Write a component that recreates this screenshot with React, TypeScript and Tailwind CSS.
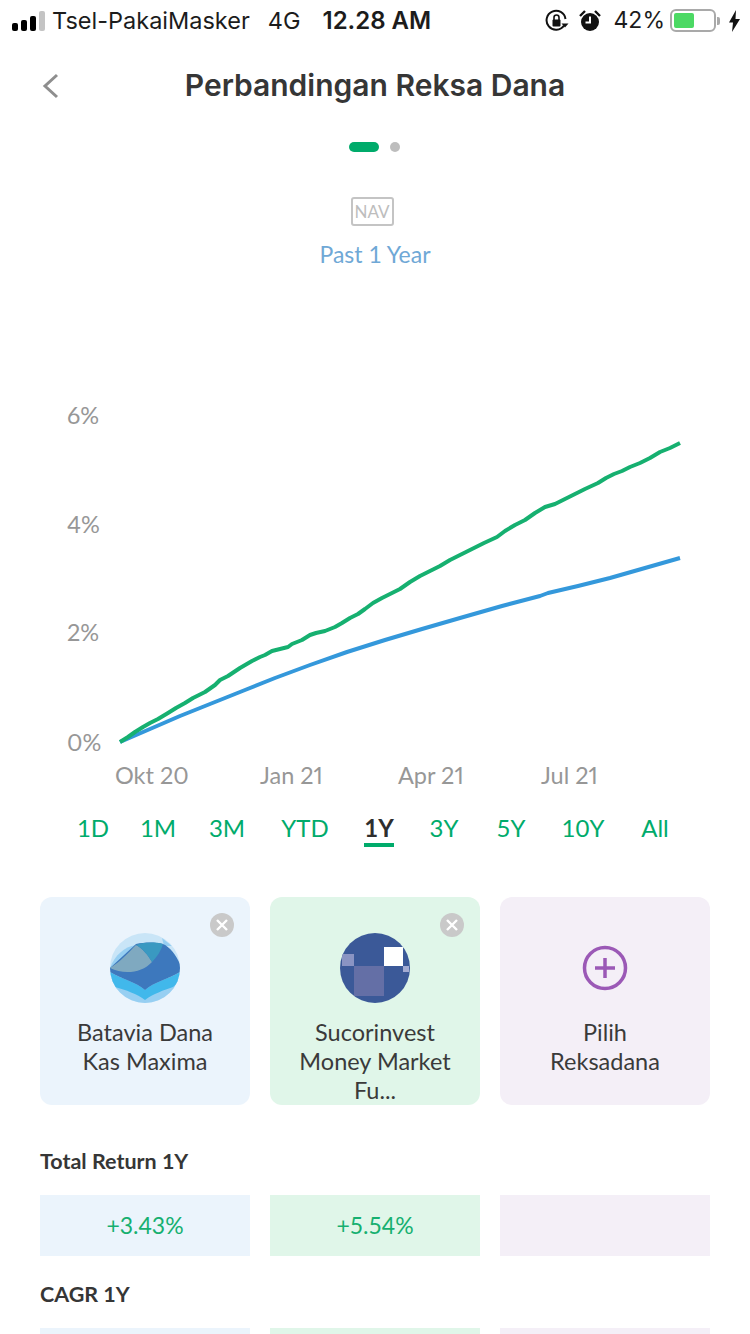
const ranges = [
  { label: "1D", width: "w-[66px]" },
  { label: "1M", width: "w-[64px]" },
  { label: "3M", width: "w-[74px]" },
  { label: "YTD", width: "w-[82px]" },
  { label: "1Y", width: "w-[66px]" },
  { label: "3Y", width: "w-[64px]" },
  { label: "5Y", width: "w-[70px]" },
  { label: "10Y", width: "w-[74px]" },
  { label: "All", width: "w-[70px]" },
];

const greenLine =
  "120,742 128,737 135,732 143,727 150,723 158,719 168,713 176,708 185,703 193,698 205,692 215,685 220,680 228,676 240,668 252,661 260,657 265,655 272,651 280,649 288,647 292,644 302,640 310,635 316,633 325,631 335,627 342,623 350,618 358,614 365,609 373,603 382,598 392,593 400,589 410,582 420,576 430,571 440,566 450,560 460,555 472,549 484,543 497,537 505,531 515,525 525,520 535,513 545,507 555,504 565,499 575,494 585,489 598,483 606,478 614,474 622,471 630,467 640,463 650,458 660,452 670,448 680,443";
const blueLine =
  "120,742 150,729 180,716 210,704 235,694 245,690 275,678 310,665 347,652 385,640 422,629 460,618 502,606 540,596 548,593 578,586 610,578 645,568 680,558";

function StatusBar() {
  return (
    <div className="flex h-[41px] items-center justify-between pl-[12px] pr-[10px] font-['Inter',sans-serif] text-[#1c1c1c]">
      <div className="flex items-center">
        <div className="flex items-end gap-[3px]">
          <div className="h-[8px] w-[6px] rounded-[2px] bg-black" />
          <div className="h-[11px] w-[6px] rounded-[2px] bg-black" />
          <div className="h-[15px] w-[6px] rounded-[2px] bg-black" />
          <div className="h-[20px] w-[6px] rounded-[2px] bg-[#c4c4c4]" />
        </div>
        <span className="ml-[7px] text-[23.5px]">Tsel-PakaiMasker</span>
        <span className="ml-[18px] text-[23.5px]">4G</span>
        <span className="ml-[22px] text-[24px] font-semibold">12.28 AM</span>
      </div>
      <div className="flex items-center">
        <svg width="24" height="24" viewBox="0 0 24 24" fill="none">
          <path d="M19 16.5A9.5 9.5 0 1 1 20.5 10" stroke="#111" strokeWidth="2" />
          <path d="M16.5 14.5h7l-3.5 4z" fill="#111" />
          <rect x="7.5" y="10.5" width="8" height="7" rx="1" fill="#111" />
          <path d="M9 11V8.5a2.5 2.5 0 0 1 5 0V11" stroke="#111" strokeWidth="1.6" />
        </svg>
        <svg className="ml-[9px]" width="24" height="24" viewBox="0 0 24 24" fill="none">
          <circle cx="12" cy="13" r="9" fill="#111" />
          <path d="M12 7.5V13.5H7.5" stroke="#fff" strokeWidth="2" />
          <path d="M2 7l5-5M22 7l-5-5" stroke="#111" strokeWidth="2.4" />
        </svg>
        <span className="ml-[12px] text-[23px]">42%</span>
        <div className="ml-[5px] flex h-[23px] w-[46px] items-center rounded-[6px] border-2 border-[#a9a9a9] p-[2px]">
          <div className="h-full w-[20px] rounded-[2px] bg-[#4cd964]" />
        </div>
        <div className="ml-[1px] h-[8px] w-[3px] rounded-r-[2px] bg-[#a9a9a9]" />
        <svg className="ml-[9px]" width="11" height="22" viewBox="0 0 11 22">
          <path d="M7 0 0 12.5h4L3 22l8-13H6.5z" fill="#111" />
        </svg>
      </div>
    </div>
  );
}

function Chart() {
  const labelClass = "fill-[#979797] text-[23.5px] [font-variant-numeric:proportional-nums]";
  return (
    <svg className="block" width="750" height="500" viewBox="0 300 750 500" fill="none">
      <text x="67" y="424" className={labelClass}>6%</text>
      <text x="67" y="533" className={labelClass}>4%</text>
      <text x="67" y="641" className={labelClass}>2%</text>
      <text x="67" y="751" className={labelClass}>0%</text>
      <text x="115" y="784" className={labelClass}>Okt 20</text>
      <text x="260" y="784" className={labelClass}>Jan 21</text>
      <text x="398" y="784" className={labelClass}>Apr 21</text>
      <text x="541" y="784" className={labelClass}>Jul 21</text>
      <polyline points={blueLine} stroke="#3498db" strokeWidth="4" strokeLinejoin="round" />
      <polyline points={greenLine} stroke="#16b070" strokeWidth="4" strokeLinejoin="round" />
    </svg>
  );
}

function BataviaLogo() {
  return (
    <svg width="70" height="70" viewBox="0 0 70 70">
      <defs>
        <clipPath id="bataviaClip">
          <circle cx="35" cy="35" r="35" />
        </clipPath>
      </defs>
      <g clipPath="url(#bataviaClip)">
        <rect width="70" height="70" fill="#c9e5f7" />
        <path d="M52 5 62 13 54 13z" fill="#97cff2" />
        <path d="M0 35C5 22 14 14 26 12L30 36 0 37z" fill="#97cff2" />
        <path d="M0 45H70V70H0z" fill="#97cff2" />
        <path d="M0 39C12 46 26 49 35 57 44 49 58 46 70 39V48L63 54C54 57 43 61 35 67 27 61 16 57 5 54L0 48z" fill="#41b8eb" />
        <path d="M26 11C35 9 45 9 53 11 60 14 66 22 70 31V39C58 46 44 49 35 57 26 49 12 46 0 39V35z" fill="#3d78bd" />
        <path d="M0 35C10 29 18 20 26 12 33 16 38 22 42 29 32 40 14 42 0 35z" fill="#7fa9c0" />
        <path d="M26 12C35 9 45 9 53 11 51 18 47 24 42 29 38 22 33 16 26 12z" fill="#3a99c1" />
      </g>
    </svg>
  );
}

function SucorLogo() {
  return (
    <svg width="70" height="70" viewBox="0 0 70 70">
      <defs>
        <clipPath id="sucorClip">
          <circle cx="35" cy="35" r="35" />
        </clipPath>
      </defs>
      <g clipPath="url(#sucorClip)">
        <rect width="70" height="70" fill="#3b5998" />
        <rect x="2" y="21" width="12" height="12" fill="#8a94c3" />
        <rect x="14" y="33" width="30" height="30" fill="#646fa6" />
        <rect x="44" y="14" width="19" height="19" fill="#ffffff" />
        <rect x="63" y="33" width="6" height="6" fill="#a3abd2" />
      </g>
    </svg>
  );
}

function CloseBadge() {
  return (
    <div className="absolute right-[16px] top-[16px] flex h-[24px] w-[24px] items-center justify-center rounded-full bg-[#c9c9c9]">
      <svg width="12" height="12" viewBox="0 0 12 12">
        <path d="M1 1l10 10M11 1 1 11" stroke="#fff" strokeWidth="2.4" />
      </svg>
    </div>
  );
}

function FundCard({ bg, logo, lines, close }: { bg: string; logo: React.ReactNode; lines: string[]; close?: boolean }) {
  return (
    <div className={"relative flex h-[208px] flex-col items-center rounded-[12px] pt-[36px] " + bg}>
      {close && <CloseBadge />}
      {logo}
      <div className="mt-[15px] text-center text-[23.5px] leading-[29px] text-[#3a3a3a]">
        {lines.map((line) => (
          <div key={line}>{line}</div>
        ))}
      </div>
    </div>
  );
}

function ValueRow({ values }: { values: string[] }) {
  const colors = ["bg-[#ebf4fc]", "bg-[#e0f6e9]", "bg-[#f4eff7]"];
  return (
    <div className="grid grid-cols-3 gap-[20px] px-[40px]">
      {colors.map((color, index) => (
        <div key={color} className={"flex h-[61px] items-center justify-center pb-[1px] text-[23px] text-[#16b070] " + color}>
          {values[index]}
        </div>
      ))}
    </div>
  );
}

export default function App() {
  return (
    <div className="h-[1334px] w-[750px] overflow-hidden bg-white font-['Lato',sans-serif]">
      <StatusBar />
      <div className="relative flex h-[88px] items-center justify-center">
        <svg className="absolute left-[42px] top-[32px]" width="17" height="26" viewBox="0 0 17 26" fill="none">
          <path d="M15 2 3 13l12 11" stroke="#8e8e8e" strokeWidth="3" />
        </svg>
        <h1 className="font-['Inter',sans-serif] text-[30px] font-semibold text-[#363636]">Perbandingan Reksa Dana</h1>
      </div>
      <div className="mt-[13px] flex items-center justify-center gap-[11px] pr-[2px]">
        <div className="h-[10px] w-[30px] rounded-full bg-[#00ab6b]" />
        <div className="h-[10px] w-[10px] rounded-full bg-[#bdbdbd]" />
      </div>
      <div className="mt-[45px] flex flex-col items-center">
        <div className="mr-[6px] flex h-[29px] w-[43px] items-center justify-center rounded-[3px] border-2 border-[#c4c4c4] text-[17px] text-[#bdbdbd]">
          NAV
        </div>
        <div className="mt-[13px] text-[23px] leading-[30px] text-[#6fa8d6]">Past 1 Year</div>
      </div>
      <div className="mt-[31px]">
        <Chart />
      </div>
      <div className="flex items-start px-[60px] pt-[13px] text-[24px] leading-[30px] text-[#00ab6b]">
        {ranges.map((range) => (
          <div key={range.label} className={"flex justify-center " + range.width}>
            <span className={range.label === "1Y" ? "border-b-[4px] border-[#00ab6b] font-bold text-[#2e2e2e]" : ""}>
              {range.label}
            </span>
          </div>
        ))}
      </div>
      <div className="mt-[50px] grid grid-cols-3 gap-[20px] px-[40px]">
        <FundCard bg="bg-[#ebf4fc]" logo={<BataviaLogo />} lines={["Batavia Dana", "Kas Maxima"]} close />
        <FundCard bg="bg-[#e0f6e9]" logo={<SucorLogo />} lines={["Sucorinvest", "Money Market", "Fu..."]} close />
        <FundCard
          bg="bg-[#f4eff7]"
          logo={
            <svg width="70" height="70" viewBox="0 0 70 70" fill="none">
              <circle cx="35" cy="35" r="20.5" stroke="#9b59b6" strokeWidth="3.5" />
              <path d="M35 25v20M25 35h20" stroke="#9b59b6" strokeWidth="3.5" />
            </svg>
          }
          lines={["Pilih", "Reksadana"]}
        />
      </div>
      <div className="mt-[42px] px-[40px] text-[21.5px] font-bold leading-[28px] text-[#363636]">Total Return 1Y</div>
      <div className="mt-[20px]">
        <ValueRow values={["+3.43%", "+5.54%", ""]} />
      </div>
      <div className="mt-[24px] px-[40px] text-[21.5px] font-bold leading-[28px] text-[#363636]">CAGR 1Y</div>
      <div className="mt-[20px]">
        <ValueRow values={["", "", ""]} />
      </div>
    </div>
  );
}
